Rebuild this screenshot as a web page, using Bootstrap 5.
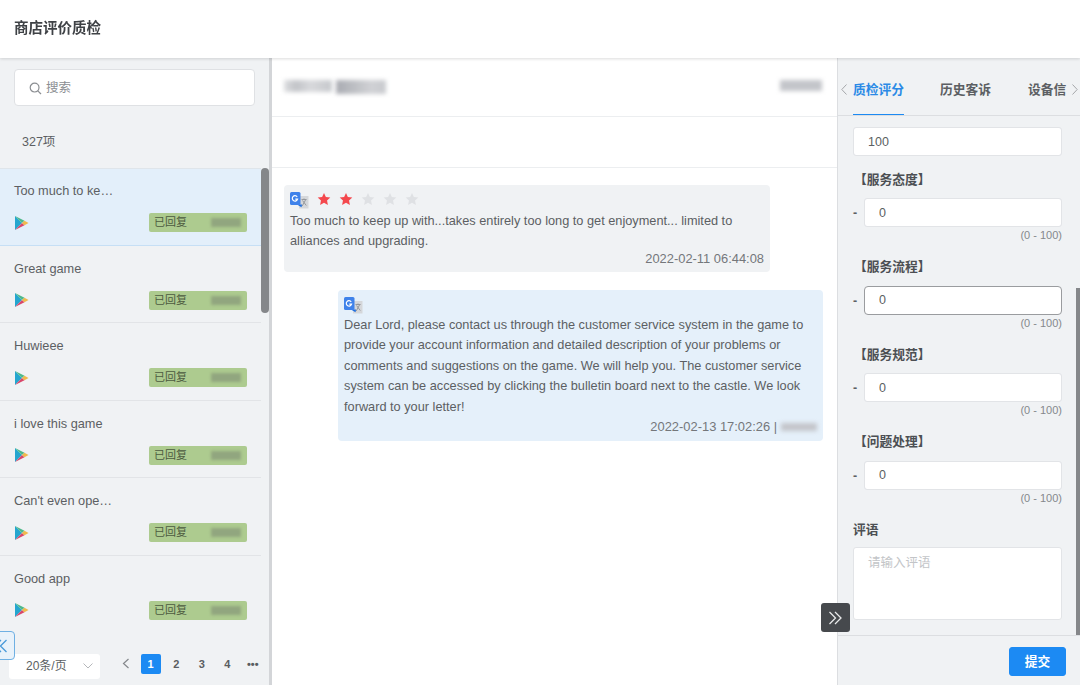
<!DOCTYPE html>
<html lang="zh">
<head>
<meta charset="utf-8">
<title>商店评价质检</title>
<link href="https://cdn.jsdelivr.net/npm/bootstrap@5.3.0/dist/css/bootstrap.min.css" rel="stylesheet">
<style>
html,body{height:100%;overflow:hidden;background:#fff}
body{font-family:"Liberation Sans","Noto Sans CJK SC",sans-serif;color:#5c5f63;font-size:12.5px}
.shell{height:685px;position:relative;overflow:hidden;filter:blur(.4px)}
.topbar{height:58px;padding-left:14px;background:#fff;box-shadow:0 1px 3px rgba(0,0,0,.14);position:relative;z-index:2;color:#3f4246;font-size:14.5px;font-weight:700}
.main-area{height:627px}
.left-pane{width:272px;flex:none;background:#f0f2f4;border-right:3px solid #d3d5d8;position:relative}
.search-box{margin:11px 14px 0;width:241px;height:37px;background:#fff;border:1px solid #dfe1e4;border-radius:4px;padding:1px 0 0 14px;color:#8b8e92;gap:4px}
.count-line{height:62px;padding:10px 0 0 22px;color:#5c5f63}
.review-list{height:465px;overflow:hidden;--bs-list-group-bg:transparent;--bs-list-group-border-color:#e2e4e7;--bs-list-group-color:#5c5f63}
.review-row{height:77.5px;padding:15px 22px 0 14px;border-width:0 0 1px;width:261px}
.review-row.is-on{background:#e3effa;border-bottom-color:#c6dff5;border-top:1px solid #dfe5ea;padding-top:14px}
.review-row .line-one{font-size:12.75px;line-height:16px;height:16px;margin-bottom:14px;white-space:nowrap}
.reply-tag{width:98px;height:19px;background:#adcb8f;border-radius:2px;padding-left:5px;font-size:11px;color:#4c5a40;margin-right:-8px}
.smudge{display:block;background:#91a67f;filter:blur(1.6px);border-radius:1px}
.reply-tag .smudge{width:30px;height:9px;margin-left:auto;margin-right:6px}
.play-ico{width:15px;height:16px;flex:none}
.thumb-left{position:absolute;left:261px;top:110px;width:8px;height:145px;background:#85878a;border-radius:4px}
.pager-row{height:52px;padding:14px 0 0 9px}
.size-pick{width:91px;height:25px;flex:none;background:#fff;border-radius:3px;padding:0 7px 0 17px;font-size:12px}
.page-nums{margin:-5px 0 0 22px;flex:none}
.page-cell{width:25.5px;text-align:center;font-weight:700;font-size:11px;color:#5a5d61;line-height:20px}
.page-cell.is-here{width:20px;height:20px;margin:0 3px 0 2.5px;background:#1c8af3;color:#fff;border-radius:2px}
.mid-pane{flex:1 1 auto;min-width:0;background:#fff;position:relative}
.mid-head{height:59px;border-bottom:1px solid #eceef0;padding:0 15px 0 12px}
.mid-band{height:51px;border-bottom:1px solid #eceef0}
.smudge-soft{display:block;background:#c3c5ca;filter:blur(2px)}
.name-one{width:48px;height:12px;background:linear-gradient(90deg,#dcdde0 0,#c2c4c8 25%,#d8d9dc 55%,#c6c8cc 100%)}
.name-two{width:50px;height:14px;background:linear-gradient(90deg,#a9abb2 0,#bfc1c5 40%,#d0d1d5 70%,#c8cace 100%)}
.name-end{width:42px;height:11px;margin-top:-4px}
.name-mini{width:36px;height:8px}
.bubble-grey{margin:17px 0 0 12px;width:486px;height:87px;background:#f0f2f4;border-radius:4px;padding:6px 6px 0;line-height:20.4px}
.bubble-blue{margin:18px 0 0 66px;width:485px;height:151px;background:#e5f0fa;border-radius:4px;padding:6px 6px 0;line-height:20.4px}
.bubble-text{font-size:12.76px;color:#5c5f63}
.bubble-time{font-size:12.9px;color:#74777b}
.bubble-grey .bubble-time{margin-top:-3px}
.icon-row{height:20px}
.bubble-blue .icon-row{height:19px}
.tr-ico{width:19px;height:18px;display:block;flex:none}
.star-set{gap:8px;margin:1px 0 0 8px}
.star-ico{width:14px;height:14px;display:block}
.right-pane{width:243px;flex:none;background:#f0f2f4;border-left:1px solid #dcdee1;position:relative}
.tab-row{height:58px;border-bottom:1px solid #dcdee1;font-size:12.75px;font-weight:700;color:#5c5f63;white-space:nowrap;overflow:hidden;padding-left:3px}
.tab-item{height:58px;line-height:63px;flex:none}
.tab-item.is-live{color:#2b8ae6;border-bottom:2px solid #1c8af3;width:51px;margin-left:6px}
.tab-two{margin-left:36px}
.tab-three{margin-left:37px}
.tab-arrow{margin-top:26px;flex:none}
.tab-arrow-end{margin-left:6px}
.form-scroll{height:519px;overflow:hidden;padding:11px 18px 0 15px}
.score-input.form-control{height:29px;border-radius:3px;border-color:#e2e4e7;padding:0 14px;font-size:12.5px;color:#5c5f63;box-shadow:none}
.score-input.focused.form-control{border-color:#9a9c9f;border-radius:4px}
.section-name{font-size:12.75px;font-weight:700;color:#4c4f53;height:14px;line-height:14px;margin:17px 0 11.5px 1px}
.section-first{margin-bottom:11px}
.section-note{margin:17.5px 0 10px 0}
.dash-col{width:11px;flex:none;font-weight:700;color:#5c5f63;padding-top:2px}
.range-note{text-align:right;font-size:11px;color:#85888c;line-height:13px;height:14px;margin-top:2px}
.remark-box.form-control{height:73px;border-radius:3px;border-color:#e2e4e7;padding:6px 14px;font-size:12.5px;box-shadow:none;background:#fff;color:#c3c5c8}
.right-foot{height:50px;border-top:1px solid #dcdee1;padding:11px 14px 0 0}
.send-btn.btn{--bs-btn-bg:#1c8af3;--bs-btn-border-color:#1c8af3;--bs-btn-color:#fff;width:57px;height:29px;padding:0;font-size:12.75px;border-radius:3px;font-weight:700}
.thumb-right{position:absolute;right:0;top:230px;width:4px;height:347px;background:#85878a}
.fold-left{position:absolute;left:-14px;top:631px;width:29px;height:29px;background:#e9f2fa;border:1px solid #6fb0e3;border-radius:4px;z-index:3}
.fold-right{position:absolute;left:821px;top:603px;width:29px;height:29px;background:#46494d;border-radius:3px;z-index:3}
</style>
</head>
<body>
<svg width="0" height="0" class="position-absolute">
  <symbol id="play" viewBox="0 0 15 16"><path d="M1 1 8 8 1 15Z" fill="#25a6cf"/><path d="M1 1 10.500 5.800 8 8Z" fill="#4fb98a"/><path d="M1 15 10.500 10.200 8 8Z" fill="#d9486b"/><path d="M10.500 5.800 14.500 8 10.500 10.200 8 8Z" fill="#f0b94d"/></symbol>
  <symbol id="trans" viewBox="0 0 19 18"><rect x="9" y="5" width="9.500" height="12.500" fill="#d5d7da"/><path d="M11.500 8.500h5M14 7.500v1M12.200 15l3.600-6.500M12.500 9.500l3.800 5" stroke="#8f9296" stroke-width=".9" fill="none"/><path d="M7 13.500h5l-.5 2.800Z" fill="#1f6fe0"/><rect x="0" y="1" width="10.500" height="13" rx="1.500" fill="#3f82ea"/><path d="M7.200 5.800a2.700 2.700 0 1 0 .4 2.300H5.300" fill="none" stroke="#fff" stroke-width="1.200"/></symbol>
  <symbol id="star" viewBox="0 0 24 24"><path d="M12 1.500l3.200 7 7.600.9-5.600 5.200 1.500 7.500L12 18.300l-6.700 3.800 1.500-7.500L1.200 9.400l7.600-.9z"/></symbol>
</svg>
<div class="shell">
  <header class="topbar d-flex align-items-center">商店评价质检</header>
  <div class="main-area d-flex">
    <aside class="left-pane">
      <div class="search-box d-flex align-items-center">
        <svg width="13" height="13" viewBox="0 0 13 13" fill="none" stroke="#8b8e92" stroke-width="1.2"><circle cx="5.600" cy="5.600" r="4.400"/><path d="M8.800 8.800 12 12"/></svg>
        <span>搜索</span>
      </div>
      <div class="count-line d-flex align-items-center">327项</div>
      <div class="review-list list-group list-group-flush">
        <div class="review-row is-on list-group-item">
          <div class="line-one">Too much to ke…</div>
          <div class="d-flex align-items-center justify-content-between"><svg class="play-ico"><use href="#play"/></svg><span class="reply-tag d-flex align-items-center">已回复<i class="smudge"></i></span></div>
        </div>
        <div class="review-row list-group-item">
          <div class="line-one">Great game</div>
          <div class="d-flex align-items-center justify-content-between"><svg class="play-ico"><use href="#play"/></svg><span class="reply-tag d-flex align-items-center">已回复<i class="smudge"></i></span></div>
        </div>
        <div class="review-row list-group-item">
          <div class="line-one">Huwieee</div>
          <div class="d-flex align-items-center justify-content-between"><svg class="play-ico"><use href="#play"/></svg><span class="reply-tag d-flex align-items-center">已回复<i class="smudge"></i></span></div>
        </div>
        <div class="review-row list-group-item">
          <div class="line-one">i love this game</div>
          <div class="d-flex align-items-center justify-content-between"><svg class="play-ico"><use href="#play"/></svg><span class="reply-tag d-flex align-items-center">已回复<i class="smudge"></i></span></div>
        </div>
        <div class="review-row list-group-item">
          <div class="line-one">Can't even ope…</div>
          <div class="d-flex align-items-center justify-content-between"><svg class="play-ico"><use href="#play"/></svg><span class="reply-tag d-flex align-items-center">已回复<i class="smudge"></i></span></div>
        </div>
        <div class="review-row list-group-item">
          <div class="line-one">Good app</div>
          <div class="d-flex align-items-center justify-content-between"><svg class="play-ico"><use href="#play"/></svg><span class="reply-tag d-flex align-items-center">已回复<i class="smudge"></i></span></div>
        </div>
      </div>
      <div class="pager-row d-flex align-items-center">
        <div class="size-pick d-flex align-items-center justify-content-between"><span>20条/页</span><svg width="10" height="6" viewBox="0 0 10 6" fill="none" stroke="#b5b7ba" stroke-width="1"><path d="M.5.5 5 5 9.500.5"/></svg></div>
        <div class="page-nums d-flex align-items-center">
          <svg class="me-2" width="8" height="11" viewBox="0 0 8 11" fill="none" stroke="#85888c" stroke-width="1.2"><path d="M6.500 1 1.500 5.500 6.500 10"/></svg>
          <span class="page-cell is-here">1</span><span class="page-cell">2</span><span class="page-cell">3</span><span class="page-cell">4</span><span class="page-cell">•••</span>
        </div>
      </div>
      <i class="thumb-left"></i>
    </aside>
    <main class="mid-pane">
      <div class="mid-head d-flex align-items-center justify-content-between">
        <div class="d-flex gap-1"><i class="smudge-soft name-one"></i><i class="smudge-soft name-two"></i></div>
        <i class="smudge-soft name-end"></i>
      </div>
      <div class="mid-band"></div>
      <section class="bubble-grey">
        <div class="icon-row d-flex align-items-start">
          <svg class="tr-ico"><use href="#trans"/></svg>
          <div class="star-set d-flex">
            <svg class="star-ico" fill="#f4484d"><use href="#star"/></svg>
            <svg class="star-ico" fill="#f4484d"><use href="#star"/></svg>
            <svg class="star-ico" fill="#dfe1e4"><use href="#star"/></svg>
            <svg class="star-ico" fill="#dfe1e4"><use href="#star"/></svg>
            <svg class="star-ico" fill="#dfe1e4"><use href="#star"/></svg>
          </div>
        </div>
        <div class="bubble-text">Too much to keep up with...takes entirely too long to get enjoyment... limited to alliances and upgrading.</div>
        <div class="bubble-time text-end">2022-02-11 06:44:08</div>
      </section>
      <section class="bubble-blue">
        <div class="icon-row d-flex align-items-start">
          <svg class="tr-ico"><use href="#trans"/></svg>
        </div>
        <div class="bubble-text">Dear Lord, please contact us through the customer service system in the game to provide your account information and detailed description of your problems or comments and suggestions on the game. We will help you. The customer service system can be accessed by clicking the bulletin board next to the castle. We look forward to your letter!</div>
        <div class="bubble-time d-flex justify-content-end align-items-center gap-1">2022-02-13 17:02:26 | <i class="smudge-soft name-mini"></i></div>
      </section>
    </main>
    <aside class="right-pane">
      <div class="tab-row d-flex align-items-start">
        <svg class="tab-arrow" width="6" height="11" viewBox="0 0 6 11" fill="none" stroke="#a5a7aa" stroke-width="1"><path d="M5.500 .5 .8 5.500 5.500 10.500"/></svg>
        <div class="tab-item is-live">质检评分</div>
        <div class="tab-item tab-two">历史客诉</div>
        <div class="tab-item tab-three">设备信</div>
        <svg class="tab-arrow tab-arrow-end" width="6" height="11" viewBox="0 0 6 11" fill="none" stroke="#a5a7aa" stroke-width="1"><path d="M.5 .5 5.200 5.500 .5 10.500"/></svg>
      </div>
      <div class="form-scroll">
        <input class="score-input form-control" value="100" aria-label="总分">
        <div class="section-name section-first">【服务态度】</div>
        <div class="d-flex align-items-center"><span class="dash-col">-</span><input class="score-input form-control" value="0" aria-label="服务态度"></div>
        <div class="range-note">(0 - 100)</div>
        <div class="section-name">【服务流程】</div>
        <div class="d-flex align-items-center"><span class="dash-col">-</span><input class="score-input focused form-control" value="0" aria-label="服务流程"></div>
        <div class="range-note">(0 - 100)</div>
        <div class="section-name">【服务规范】</div>
        <div class="d-flex align-items-center"><span class="dash-col">-</span><input class="score-input form-control" value="0" aria-label="服务规范"></div>
        <div class="range-note">(0 - 100)</div>
        <div class="section-name">【问题处理】</div>
        <div class="d-flex align-items-center"><span class="dash-col">-</span><input class="score-input form-control" value="0" aria-label="问题处理"></div>
        <div class="range-note">(0 - 100)</div>
        <div class="section-name section-note">评语</div>
        <div class="remark-box form-control">请输入评语</div>
      </div>
      <div class="right-foot d-flex justify-content-end"><button class="send-btn btn" type="button">提交</button></div>
      <i class="thumb-right"></i>
    </aside>
  </div>
  <div class="fold-left d-flex align-items-center justify-content-center"><svg width="15" height="14" viewBox="0 0 15 14" fill="none" stroke="#4a9ad9" stroke-width="1.300"><path d="M13.500 1 7.500 7 13.500 13"/><path d="M8 1 2 7 8 13"/></svg></div>
  <div class="fold-right d-flex align-items-center justify-content-center"><svg width="15" height="14" viewBox="0 0 15 14" fill="none" stroke="#e8e9ea" stroke-width="1.300"><path d="M1.500 1 7.500 7 1.500 13"/><path d="M7 1 13 7 7 13"/></svg></div>
</div>
<script src="https://cdn.jsdelivr.net/npm/bootstrap@5.3.0/dist/js/bootstrap.bundle.min.js"></script>
</body>
</html>
